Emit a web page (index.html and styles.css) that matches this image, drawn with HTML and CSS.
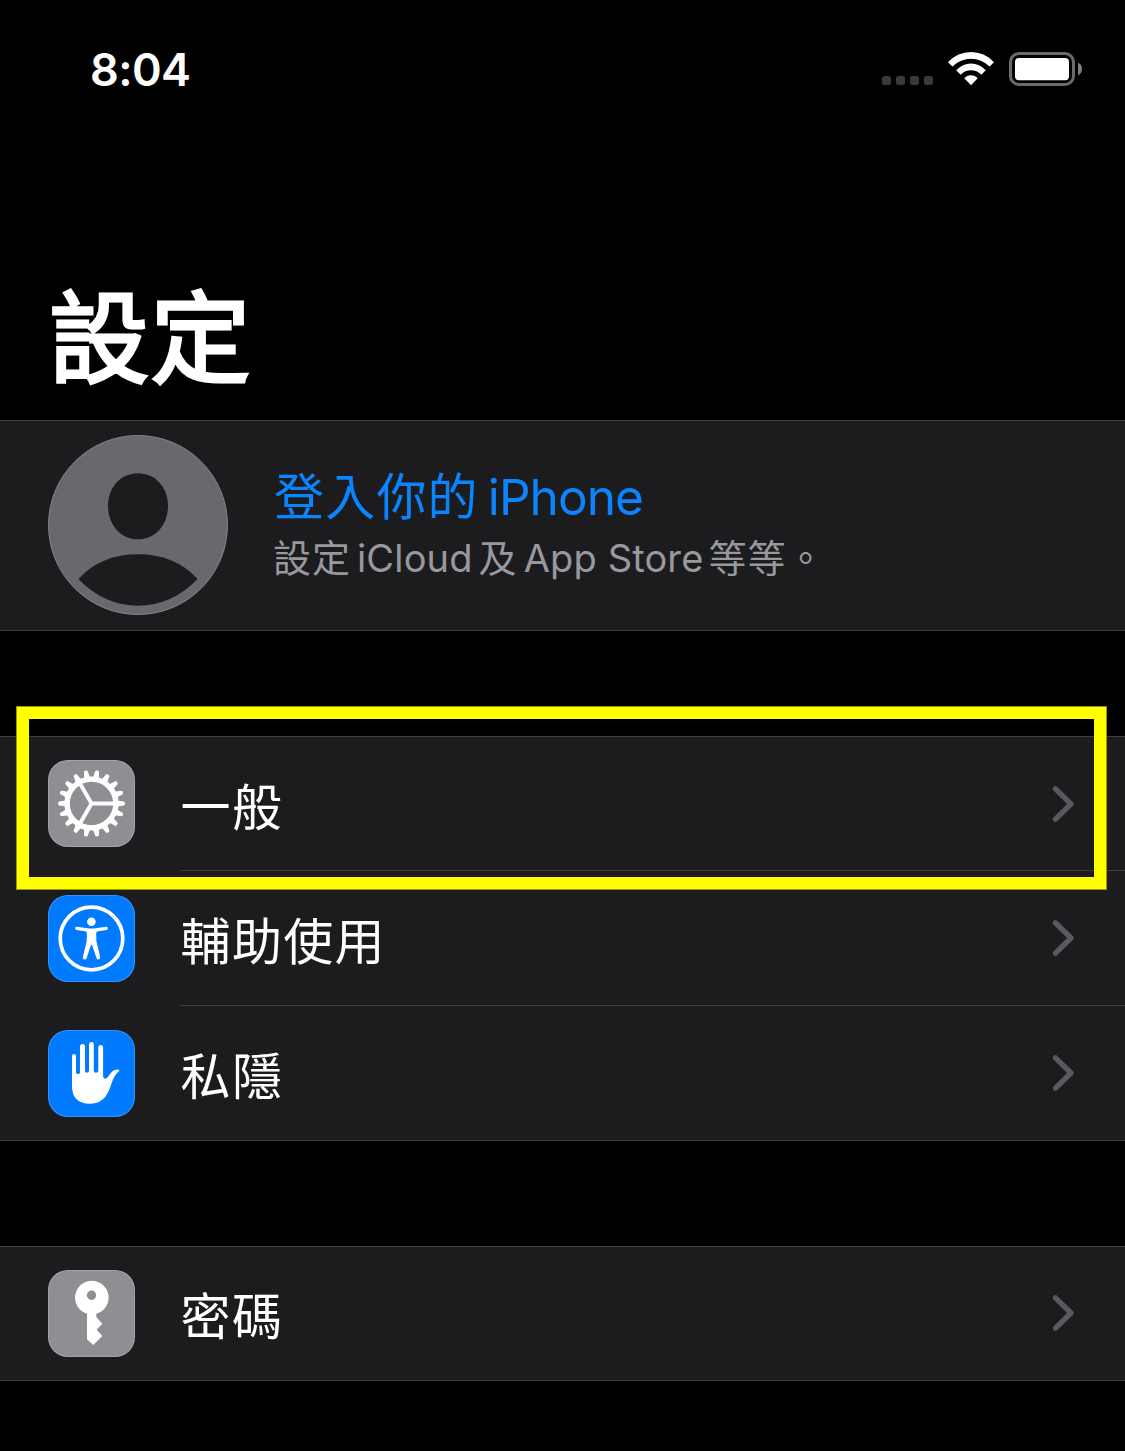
FILE: index.html
```html
<!DOCTYPE html>
<html lang="zh-Hant-HK">
<head>
<meta charset="utf-8">
<title>設定</title>
<link rel="stylesheet" href="styles.css">
</head>
<body>
<svg class="defs" width="0" height="0" aria-hidden="true">
  <symbol id="chevron" viewBox="0 0 24 38"><path d="M4.5 3.8 20 19 4.5 34.2" fill="none" stroke="#5a5a5e" stroke-width="5.3" stroke-linecap="round" stroke-linejoin="round"/></symbol>
</svg>

<header class="status">
  <time class="clock">8:04</time>
  <div class="indicators">
    <div class="signal"><i></i><i></i><i></i><i></i></div>
    <svg class="wifi" width="46" height="34" viewBox="0 0 46 34" fill="#fff">
      <path d="M0 10.2Q9.5 0 23 0Q36.500 0 46 10.200L41.600 14.600Q33.500 6.800 23 6.800Q12.500 6.800 4.400 14.600Z"/>
      <path d="M8.200 18.200Q14.500 11.400 23 11.400Q31.500 11.400 37.800 18.200L33.300 22.700Q28.900 18.300 23 18.300Q17.100 18.300 12.700 22.700Z"/>
      <path d="M16.300 26.300Q19 23.200 23 23.200Q27 23.200 29.700 26.300L23 33.200Z"/>
    </svg>
    <svg class="battery" width="74" height="34" viewBox="0 0 74 34">
      <rect x="1.500" y="1.500" width="63" height="31" rx="8.500" fill="none" stroke="#6b6b6b" stroke-width="3"/>
      <rect x="6" y="6" width="54" height="22.300" rx="4" fill="#fff"/>
      <path d="M69 10.700Q73 12.500 73 17T69 23.300Z" fill="#808080"/>
    </svg>
  </div>
</header>

<h1 class="title">設定</h1>

<main>
  <section class="group profile">
    <svg class="avatar" width="180" height="180" viewBox="0 0 180 180">
      <circle cx="90" cy="90" r="89.500" fill="#69686d" stroke="#858489"/>
      <path d="M90 38.300C107 38.300 120 52 120 71C120 90 107 104.300 90 104.300C73 104.300 60 90 60 71C60 52 73 38.300 90 38.300Z" fill="#1c1c1e"/>
      <path d="M31.300 143Q54 119.300 90 119.300T148.700 143Q149.500 144 148.700 145Q123 170.700 90 170.700T31.300 145Q30.500 144 31.300 143Z" fill="#1c1c1e"/>
    </svg>
    <div class="account">
      <div class="signin">登入你的<span class="latin">iPhone</span></div>
      <div class="detail">設定<span class="latin icloud">iCloud</span>及<span class="latin store">App Store</span>等等<span class="stop">。</span></div>
    </div>
  </section>

  <section class="group">
    <div class="row highlighted">
      <svg class="icon gray" width="87" height="87" viewBox="0 0 87 87">
        <defs><path id="tooth" d="M69.300 40.400 75.800 41.600Q76.800 41.800 76.800 42.800V44.200Q76.800 45.200 75.800 45.400L69.300 46.600Z"/></defs>
        <circle cx="43.500" cy="43.500" r="24.400" fill="none" stroke="#fff" stroke-width="5.400"/>
        <g fill="#fff">
          <use href="#tooth"/><use href="#tooth" transform="rotate(20 43.500 43.500)"/><use href="#tooth" transform="rotate(40 43.500 43.500)"/><use href="#tooth" transform="rotate(60 43.500 43.500)"/><use href="#tooth" transform="rotate(80 43.500 43.500)"/><use href="#tooth" transform="rotate(100 43.500 43.500)"/><use href="#tooth" transform="rotate(120 43.500 43.500)"/><use href="#tooth" transform="rotate(140 43.500 43.500)"/><use href="#tooth" transform="rotate(160 43.500 43.500)"/><use href="#tooth" transform="rotate(180 43.500 43.500)"/><use href="#tooth" transform="rotate(200 43.500 43.500)"/><use href="#tooth" transform="rotate(220 43.500 43.500)"/><use href="#tooth" transform="rotate(240 43.500 43.500)"/><use href="#tooth" transform="rotate(260 43.500 43.500)"/><use href="#tooth" transform="rotate(280 43.500 43.500)"/><use href="#tooth" transform="rotate(300 43.500 43.500)"/><use href="#tooth" transform="rotate(320 43.500 43.500)"/><use href="#tooth" transform="rotate(340 43.500 43.500)"/>
        </g>
        <path d="M43.500 43.500H67M43.500 43.500 31.700 23.100M43.500 43.500 31.700 63.900" stroke="#fff" stroke-width="3.900"/>
      </svg>
      <div class="cell"><span>一般</span><svg class="chevron" width="24" height="38"><use href="#chevron"/></svg></div>
    </div>
    <div class="row">
      <svg class="icon blue" width="87" height="87" viewBox="0 0 87 87">
        <circle cx="43.500" cy="43.500" r="31.300" fill="none" stroke="#fff" stroke-width="3.700"/>
        <circle cx="43.400" cy="26.800" r="4.300" fill="#fff"/>
        <path d="M28.900 31.700 39.500 33.200Q43.500 33.700 47.500 33.200L58.100 31.700A1.600 1.600 0 0 1 58.500 34.900L50 36.300Q48.200 36.700 48.200 38.500L48.400 46 52.200 62A1.900 1.900 0 0 1 48.600 63.200L44.200 50.500Q43.500 48.800 42.800 50.500L38.600 63.200A1.900 1.900 0 0 1 34.900 62L38.700 46 38.900 38.500Q38.900 36.700 37.100 36.300L28.500 34.900A1.600 1.600 0 0 1 28.900 31.700Z" fill="#fff"/>
      </svg>
      <div class="cell"><span>輔助使用</span><svg class="chevron" width="24" height="38"><use href="#chevron"/></svg></div>
    </div>
    <div class="row">
      <svg class="icon blue" width="87" height="87" viewBox="0 0 87 87">
        <path d="M24 56V26A2 2 0 0 1 28 26V42.500Q28.200 44 30 44T32 42.500V16.500A2.500 2.500 0 0 1 37 16.500V41Q37.300 42.800 39 42.800T41 41V14.400A2.400 2.400 0 0 1 45.800 14.400V41Q46 42.800 48 42.800T50.300 41V17.400A2.400 2.400 0 0 1 55.100 17.400V46C55.300 48.500 56.800 49.300 58.500 48.300C61.500 46 63 40.500 68 39.700C71 39.300 71.700 39.800 71 41.200C68.500 43.500 66.500 46 64.800 50C61.500 58 59.500 73.700 42 73.700Q24 73.700 24 56Z" fill="#fff"/>
      </svg>
      <div class="cell"><span>私隱</span><svg class="chevron" width="24" height="38"><use href="#chevron"/></svg></div>
    </div>
  </section>

  <section class="group">
    <div class="row">
      <svg class="icon gray" width="87" height="87" viewBox="0 0 87 87">
        <path fill="#fff" fill-rule="evenodd" d="M39 43.700A16.800 16.800 0 1 1 48.300 43.800V47L54.300 53.700 48.700 59.700 54.300 66 45.300 75 39 69.300ZM48.200 25.300A4.700 4.700 0 1 0 38.800 25.300A4.700 4.700 0 1 0 48.200 25.300Z"/>
      </svg>
      <div class="cell"><span>密碼</span><svg class="chevron" width="24" height="38"><use href="#chevron"/></svg></div>
    </div>
  </section>
</main>
</body>
</html>
```
FILE: styles.css
```css
*, *::after { box-sizing: border-box; }
body {
  margin: 0;
  min-height: 1451px;
  background: #000;
  color: #fff;
  font-family: Inter, "Noto Sans CJK TC", sans-serif;
}
.defs { display: block; height: 0; }
svg { display: block; flex: none; }

.status {
  display: flex;
  justify-content: space-between;
  align-items: center;
  height: 138px;
  padding: 0 42px 0 90px;
}
.clock { padding-top: 1px; font-size: 45px; font-weight: 600; line-height: 54px; letter-spacing: -0.6px; }
.indicators { display: flex; align-items: flex-end; }
.signal { display: flex; gap: 5px; margin: 0 15px 1px 0; }
.signal i { width: 9px; height: 9px; border-radius: 2.5px; background: #3a3a3a; }
.wifi { margin-right: 15px; }

.title {
  margin: 0;
  height: 282px;
  padding: 119px 0 0 49px;
  font: 400 100px/150px "Noto Sans CJK TC", sans-serif;
  letter-spacing: 1.5px;
  -webkit-text-stroke: 3.2px #fff;
}

.group {
  margin-bottom: 105px;
  border-top: 1px solid #3d3d40;
  border-bottom: 1px solid #3d3d40;
  background: #1c1c1e;
}
.profile {
  display: flex;
  gap: 46px;
  height: 211px;
  padding: 14px 0 0 48px;
}
.account { padding-top: 26px; font-family: "Noto Sans CJK TC", sans-serif; white-space: nowrap; }
.latin { font-family: Inter, sans-serif; }
.signin { height: 66px; color: #0a84ff; font-size: 50px; line-height: 64px; letter-spacing: 1.2px; }
.signin .latin { margin-left: 9px; font-size: 49.5px; letter-spacing: -0.9px; }
.detail { margin-left: -1px; color: #98989f; font-size: 38px; line-height: 58px; letter-spacing: 1px; }
.detail .latin { letter-spacing: 0.15px; }
.icloud { margin: 0 6px; }
.store { margin: 0 5px 0 6px; letter-spacing: 0; }

.row {
  position: relative;
  display: flex;
  align-items: flex-start;
  gap: 45px;
  height: 135px;
  padding-left: 48px;
}
.row:first-child, .row:last-child { height: 134px; }
.row:only-child { height: 133px; }
.icon { margin-top: 24px; border-radius: 20px; box-shadow: inset 0 0 0 1px rgba(255, 255, 255, 0.2); }
.row:first-child .icon { margin-top: 23px; }
.gray { background: #8e8e93; }
.blue { background: #007aff; }
.cell {
  display: flex;
  flex: 1;
  justify-content: space-between;
  align-items: center;
  height: 100%;
  padding-right: 50px;
  border-bottom: 1px solid #3d3d40;
  font: 400 50px/72px "Noto Sans CJK TC", sans-serif;
  letter-spacing: 1.3px;
}
.cell span { margin-left: 0.6px; }
.row:last-child .cell { padding-bottom: 1px; border-bottom: 0; }

/* Marker frame drawn over the row and its surroundings */
.highlighted::after {
  content: "";
  position: absolute;
  z-index: 1;
  top: -31px;
  left: 16px;
  width: 1091px;
  height: 184px;
  border: 13px solid #ffff00;
  outline: 1px solid rgba(110, 110, 0, 0.7);
  outline-offset: -1px;
}
```
